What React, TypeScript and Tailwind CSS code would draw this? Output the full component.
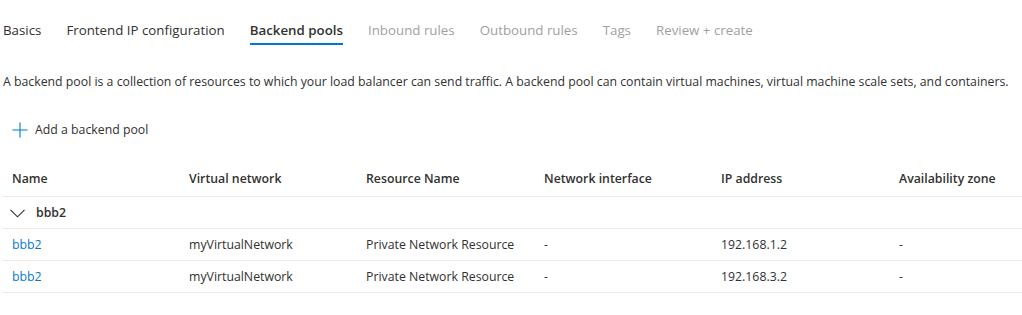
const tabs = [
  { label: "Basics", active: false, disabled: false },
  { label: "Frontend IP configuration", active: false, disabled: false },
  { label: "Backend pools", active: true, disabled: false },
  { label: "Inbound rules", active: false, disabled: true },
  { label: "Outbound rules", active: false, disabled: true },
  { label: "Tags", active: false, disabled: true },
  { label: "Review + create", active: false, disabled: true },
];

const columns = ["Name", "Virtual network", "Resource Name", "Network interface", "IP address", "Availability zone"];

const rows = [
  { name: "bbb2", vnet: "myVirtualNetwork", resource: "Private Network Resource", nic: "-", ip: "192.168.1.2", zone: "-" },
  { name: "bbb2", vnet: "myVirtualNetwork", resource: "Private Network Resource", nic: "-", ip: "192.168.3.2", zone: "-" },
];

const grid = "grid grid-cols-[177px_177px_178px_177px_178px_1fr] pl-[9px]";

function PlusIcon() {
  return (
    <svg width="16" height="16" viewBox="0 0 16 16" className="text-[#0078d4]">
      <path d="M8 0.5v15M0.5 8h15" stroke="currentColor" strokeWidth="1.1" fill="none" />
    </svg>
  );
}

function Chevron() {
  return (
    <svg width="15" height="9" viewBox="0 0 15 9" className="text-[#323130]">
      <path d="M0.5 0.8L7.5 7.8L14.5 0.8" stroke="currentColor" strokeWidth="1.1" fill="none" />
    </svg>
  );
}

export default function App() {
  return (
    <main className="h-[315px] w-[1022px] overflow-hidden bg-white font-['Segoe_UI','Open_Sans',sans-serif] text-[#323130]">
      <nav className="flex h-[46px] items-end pl-[3px]">
        {tabs.map((tab, index) => (
          <div
            key={tab.label}
            className={`flex h-[46px] flex-col justify-between pt-[20px] text-[13.3px] leading-[20px] ${index === 0 ? "" : "ml-[25px]"} ${
              tab.active ? "font-semibold text-[#323130]" : tab.disabled ? "text-[#a19f9d]" : "text-[#323130]"
            }`}
          >
            <span className="whitespace-nowrap">{tab.label}</span>
            <span className={`mb-[1px] h-[2px] ${tab.active ? "bg-[#0078d4]" : "bg-transparent"}`} />
          </div>
        ))}
      </nav>

      <p className="mt-[27px] pl-[3px] text-[12.3px] leading-[18px] whitespace-nowrap">
        A backend pool is a collection of resources to which your load balancer can send traffic. A backend pool can contain virtual machines, virtual machine scale sets, and containers.
      </p>

      <button type="button" className="mt-[30px] ml-[12px] flex items-center gap-[7px] text-[12.3px] leading-[18px]">
        <PlusIcon />
        <span>Add a backend pool</span>
      </button>

      <section className="mt-[22px] ml-[3px]">
        <div className={`${grid} h-[36px] items-end pb-[8px] border-b border-[#edebe9] text-[12.3px] font-semibold leading-[18px]`}>
          {columns.map((col) => (
            <div key={col} className="whitespace-nowrap">
              {col}
            </div>
          ))}
        </div>

        <div className="flex h-[32px] items-center gap-[11px] border-b border-[#edebe9] pt-[1px] pl-[7px] text-[12.3px] font-semibold">
          <Chevron />
          <span>bbb2</span>
        </div>

        {rows.map((row) => (
          <div key={row.ip} className={`${grid} h-[32px] items-center border-b border-[#edebe9] pt-[1px] text-[12.3px] leading-[18px]`}>
            <a className="text-[#0078d4]">{row.name}</a>
            <div>{row.vnet}</div>
            <div>{row.resource}</div>
            <div>{row.nic}</div>
            <div>{row.ip}</div>
            <div>{row.zone}</div>
          </div>
        ))}
      </section>
    </main>
  );
}
